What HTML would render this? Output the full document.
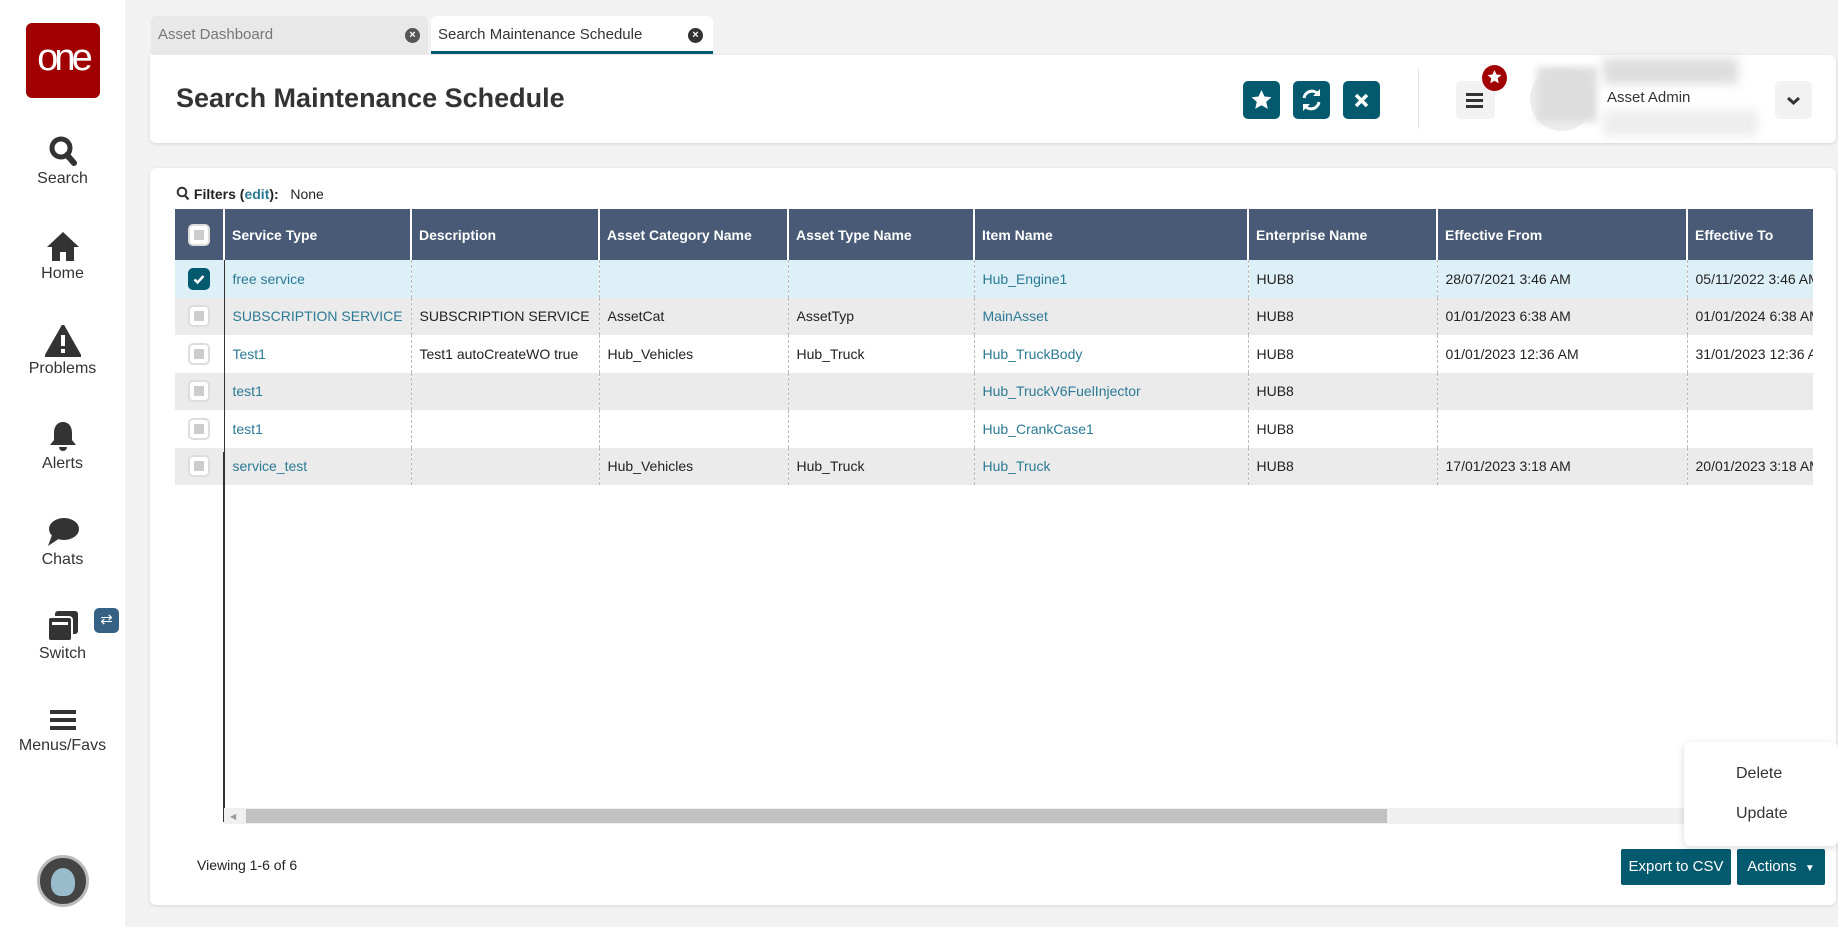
<!DOCTYPE html>
<html><head><meta charset="utf-8"><style>
*{box-sizing:border-box;margin:0;padding:0}
body{width:1838px;height:927px;background:#f2f2f2;font-family:"Liberation Sans",sans-serif;position:relative;overflow:hidden;color:#222}
.abs{position:absolute}
#side{left:0;top:0;width:125px;height:927px;background:#fff}
.si{position:absolute;left:0;width:125px;text-align:center;font-size:16px;color:#333}
.si svg{display:block;margin:0 auto 3px}
.tab{top:16px;height:38px;border-radius:5px 5px 0 0;font-size:15px;line-height:38px;padding-left:7px}
.x{position:absolute;top:12px;width:15px;height:15px;border-radius:50%;background:#555;color:#fff;font-size:11px;line-height:15px;text-align:center;font-weight:bold}
.card{background:#fff;border-radius:6px;box-shadow:0 1px 3px rgba(0,0,0,.12)}
.tb{width:37px;height:38px;background:#035a6e;border-radius:5px;top:81px}
table{border-collapse:collapse;font-size:14px;table-layout:fixed}
th{background:#485a75;color:#fff;text-align:left;font-weight:bold;height:51px;padding-left:7px;border-left:2px solid #fff;font-size:14px}
td{height:37.5px;padding-left:8px;border-left:1px dashed #bbb;white-space:nowrap;overflow:hidden}
td:first-child,th:first-child{border-left:none;padding-left:0;text-align:center}
td:nth-child(2){border-left:1.5px solid #333}
tr.a td{background:#ebebeb}
tr.s td{background:#ddf0f7}
.lk{color:#2b7a96}
.cb{display:inline-block;width:22px;height:22px;border:2px solid #ddd;border-radius:5px;background:#fff;vertical-align:middle;position:relative}
.cb:after{content:"";position:absolute;left:4px;top:4px;width:10px;height:10px;background:#ccc}
.cb.on{background:#035a6e;border-color:#035a6e}
.cb.on:after{display:none}
.btn{background:#035a6e;color:#fff;font-size:15px;text-align:center;border-radius:2px}
</style></head><body>
<div id="side" class="abs">
 <div class="abs" style="left:26px;top:23px;width:74px;height:75px;background:#a00000;border-radius:6px;color:#fff;font-size:38px;text-align:center;line-height:70px;letter-spacing:-4px">one</div>
 <div class="si" style="top:135px"><svg width="30" height="32" viewBox="0 0 30 32"><circle cx="13" cy="13" r="9" fill="none" stroke="#333" stroke-width="5"/><path d="M19 20l7 8" stroke="#333" stroke-width="6" stroke-linecap="round"/></svg>Search</div>
 <div class="si" style="top:230px"><svg width="36" height="32" viewBox="0 0 36 32"><path d="M18 2L2 17h5v14h8v-9h6v9h8V17h5z" fill="#333"/></svg>Home</div>
 <div class="si" style="top:325px"><svg width="36" height="32" viewBox="0 0 36 32"><path d="M18 1L1 31h34z" fill="#333" stroke="#333" stroke-linejoin="round" stroke-width="3"/><rect x="16" y="10" width="4" height="11" fill="#fff"/><rect x="16" y="24" width="4" height="4" fill="#fff"/></svg>Problems</div>
 <div class="si" style="top:420px"><svg width="30" height="32" viewBox="0 0 30 32"><path d="M15 2c-6 0-9 5-9 11v7l-4 5h26l-4-5v-7c0-6-3-11-9-11z" fill="#333"/><path d="M11 27a4 4 0 0 0 8 0" fill="#333"/></svg>Alerts</div>
 <div class="si" style="top:516px"><svg width="34" height="32" viewBox="0 0 34 32"><ellipse cx="18" cy="13" rx="15" ry="11" fill="#333"/><path d="M6 19L2 30 14 22z" fill="#333"/></svg>Chats</div>
 <div class="si" style="top:610px"><svg width="34" height="32" viewBox="0 0 34 32"><rect x="9" y="1" width="23" height="23" rx="3" fill="#333"/><rect x="2" y="7" width="24" height="24" rx="3" fill="#333" stroke="#fff" stroke-width="2"/><rect x="6" y="12" width="16" height="3" fill="#fff"/></svg>Switch</div>
 <div class="abs" style="left:94px;top:608px;width:25px;height:25px;background:#356185;border-radius:5px;color:#fff;font-size:15px;text-align:center;line-height:24px">⇄</div>
 <div class="si" style="top:706px"><svg width="30" height="28" viewBox="0 0 30 28"><rect x="2" y="4" width="26" height="4" fill="#333"/><rect x="2" y="12" width="26" height="4" fill="#333"/><rect x="2" y="20" width="26" height="4" fill="#333"/></svg>Menus/Favs</div>
 <div class="abs" style="left:37px;top:855px;width:52px;height:52px;border-radius:50%;background:#444;border:3px solid #bbb"><div style="margin:10px auto;width:24px;height:28px;border-radius:50% 50% 40% 40%;background:#9bc"></div></div>
</div>
<div class="abs tab" style="left:151px;width:277px;background:#e8e8e8;color:#777">Asset Dashboard<span class="x" style="right:8px">×</span></div>
<div class="abs tab" style="left:431px;width:282px;background:#fff;color:#333;border-bottom:3px solid #035a6e">Search Maintenance Schedule<span class="x" style="right:10px;background:#333">×</span></div>
<div class="abs card" style="left:150px;top:55px;width:1686px;height:88px;border-radius:0 6px 6px 6px"></div>
<div class="abs" style="left:176px;top:83px;font-size:27px;font-weight:bold;color:#333">Search Maintenance Schedule</div>
<div class="abs tb" style="left:1243px"><svg width="37" height="38" viewBox="0 0 37 38"><path d="M18.5 9l3 6.5 7 .7-5.3 4.7 1.6 7-6.3-3.7-6.3 3.7 1.6-7-5.3-4.7 7-.7z" fill="#fff"/></svg></div>
<div class="abs tb" style="left:1293px"><svg width="37" height="38" viewBox="0 0 37 38"><path d="M11 17a8 8 0 0 1 14-4M26 21a8 8 0 0 1-14 4" stroke="#fff" stroke-width="3" fill="none"/><path d="M27 8v7h-7zM10 30v-7h7z" fill="#fff"/></svg></div>
<div class="abs tb" style="left:1343px"><svg width="37" height="38" viewBox="0 0 37 38"><path d="M13 14l11 11M24 14L13 25" stroke="#fff" stroke-width="3.5"/></svg></div>
<div class="abs" style="left:1418px;top:69px;width:1px;height:60px;background:#e4e4e4"></div>
<div class="abs" style="left:1456px;top:81px;width:39px;height:38px;background:#f2f2f2;border-radius:5px"><svg width="39" height="38"><rect x="10" y="12" width="17" height="3" fill="#333"/><rect x="10" y="18" width="17" height="3" fill="#333"/><rect x="10" y="24" width="17" height="3" fill="#333"/></svg></div>
<div class="abs" style="left:1482px;top:65px;width:25px;height:26px;border-radius:50%;background:#a00000"><svg width="25" height="26"><path d="M12.5 5l2 4.5 5 .5-3.8 3.3 1.1 5-4.3-2.6-4.3 2.6 1.1-5L5.5 10l5-.5z" fill="#fff"/></svg></div>
<div class="abs" style="left:1530px;top:67px;width:64px;height:64px;border-radius:50%;background:#eee"></div>
<div class="abs" style="left:1537px;top:67px;width:60px;height:55px;background:#ddd;filter:blur(4px)"></div>
<div class="abs" style="left:1603px;top:58px;width:135px;height:26px;background:#ddd;filter:blur(5px)"></div>
<div class="abs" style="left:1603px;top:110px;width:155px;height:26px;background:#eee;filter:blur(5px)"></div>
<div class="abs" style="left:1607px;top:89px;font-size:15px;color:#333">Asset Admin</div>
<div class="abs" style="left:1775px;top:81px;width:37px;height:38px;background:#f2f2f2;border-radius:5px"><svg width="37" height="38"><path d="M13 17l5.5 5 5.5-5" stroke="#333" stroke-width="3" fill="none"/></svg></div>

<div class="abs card" style="left:150px;top:168px;width:1686px;height:737px"></div>
<div class="abs" style="left:176px;top:186px;font-size:14px"><svg width="14" height="15" viewBox="0 0 14 15" style="vertical-align:-2px"><circle cx="6" cy="6" r="4.3" stroke="#333" stroke-width="2" fill="none"/><path d="M9 9.5l3.5 4" stroke="#333" stroke-width="2.2"/></svg> <b>Filters (<span class="lk">edit</span>):</b>&nbsp;&nbsp; None</div>
<div class="abs" style="left:175px;top:209px;width:1638px;height:615px;overflow:hidden">
<table style="width:1700px">
<colgroup><col style="width:49px"><col style="width:187px"><col style="width:188px"><col style="width:189px"><col style="width:186px"><col style="width:274px"><col style="width:189px"><col style="width:250px"><col style="width:188px"></colgroup>
<tr><th><span class="cb"></span></th><th>Service Type</th><th>Description</th><th>Asset Category Name</th><th>Asset Type Name</th><th>Item Name</th><th>Enterprise Name</th><th>Effective From</th><th>Effective To</th></tr>
<tr class="s"><td><span class="cb on"><svg width="18" height="18" viewBox="0 0 18 18" style="position:absolute;left:0;top:0"><path d="M4.5 9.5l3 3 6-6.5" stroke="#fff" stroke-width="2.5" fill="none"/></svg></span></td><td class="lk">free service</td><td></td><td></td><td></td><td class="lk">Hub_Engine1</td><td>HUB8</td><td>28/07/2021 3:46 AM</td><td>05/11/2022 3:46 AM</td></tr>
<tr class="a"><td><span class="cb"></span></td><td class="lk">SUBSCRIPTION SERVICE</td><td>SUBSCRIPTION SERVICE</td><td>AssetCat</td><td>AssetTyp</td><td class="lk">MainAsset</td><td>HUB8</td><td>01/01/2023 6:38 AM</td><td>01/01/2024 6:38 AM</td></tr>
<tr><td><span class="cb"></span></td><td class="lk">Test1</td><td>Test1 autoCreateWO true</td><td>Hub_Vehicles</td><td>Hub_Truck</td><td class="lk">Hub_TruckBody</td><td>HUB8</td><td>01/01/2023 12:36 AM</td><td>31/01/2023 12:36 AM</td></tr>
<tr class="a"><td><span class="cb"></span></td><td class="lk">test1</td><td></td><td></td><td></td><td class="lk">Hub_TruckV6FuelInjector</td><td>HUB8</td><td></td><td></td></tr>
<tr><td><span class="cb"></span></td><td class="lk">test1</td><td></td><td></td><td></td><td class="lk">Hub_CrankCase1</td><td>HUB8</td><td></td><td></td></tr>
<tr class="a"><td><span class="cb"></span></td><td class="lk">service_test</td><td></td><td>Hub_Vehicles</td><td>Hub_Truck</td><td class="lk">Hub_Truck</td><td>HUB8</td><td>17/01/2023 3:18 AM</td><td>20/01/2023 3:18 AM</td></tr>
</table>
<div class="abs" style="left:48px;top:243px;width:1.5px;height:370px;background:#333"></div>
<div class="abs" style="left:49px;top:599px;width:1589px;height:16px;background:#f0f0f0"></div>
<div class="abs" style="left:71px;top:600px;width:1141px;height:14px;background:#c1c1c1"></div>
<div class="abs" style="left:55px;top:603px;font-size:8px;color:#999">◀</div>
</div>
<div class="abs" style="left:197px;top:857px;font-size:14px">Viewing 1-6 of 6</div>
<div class="abs btn" style="left:1621px;top:849px;width:110px;height:36px;line-height:36px">Export to CSV</div>
<div class="abs btn" style="left:1737px;top:849px;width:88px;height:36px;line-height:36px">Actions &nbsp;<span style="font-size:10px">▼</span></div>
<div class="abs card" style="left:1684px;top:742px;width:154px;height:104px;box-shadow:0 2px 8px rgba(0,0,0,.15);font-size:16px;color:#333">
<div style="position:absolute;left:52px;top:23px">Delete</div><div style="position:absolute;left:52px;top:63px">Update</div></div>
</body></html>
